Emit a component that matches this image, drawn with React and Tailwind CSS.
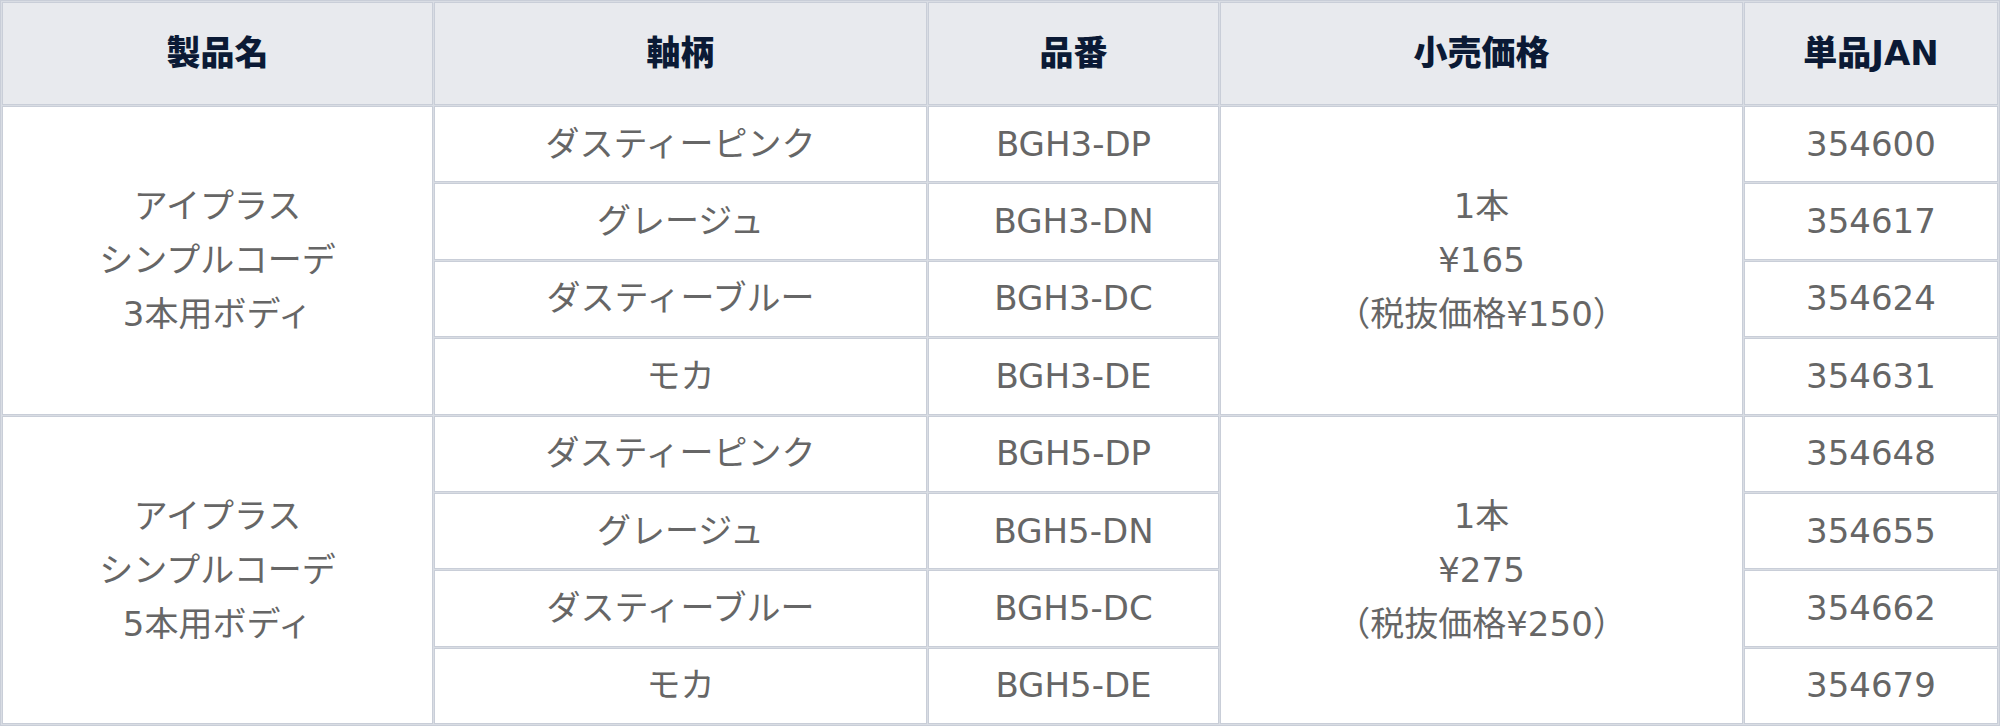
import React from "react";

const groups = [
  {
    name: ["アイプラス", "シンプルコーデ", "3本用ボディ"],
    price: ["1本", "¥165", "（税抜価格¥150）"],
    items: [
      ["ダスティーピンク", "BGH3-DP", "354600"],
      ["グレージュ", "BGH3-DN", "354617"],
      ["ダスティーブルー", "BGH3-DC", "354624"],
      ["モカ", "BGH3-DE", "354631"],
    ],
  },
  {
    name: ["アイプラス", "シンプルコーデ", "5本用ボディ"],
    price: ["1本", "¥275", "（税抜価格¥250）"],
    items: [
      ["ダスティーピンク", "BGH5-DP", "354648"],
      ["グレージュ", "BGH5-DN", "354655"],
      ["ダスティーブルー", "BGH5-DC", "354662"],
      ["モカ", "BGH5-DE", "354679"],
    ],
  },
];

const headers = ["製品名", "軸柄", "品番", "小売価格", "単品JAN"];

const cell =
  "border border-[#c9ced8] bg-white flex items-center justify-center text-center text-[#666666]";

export default function App() {
  return (
    <div
      className="w-[2000px] h-[726px] grid grid-cols-[431px_493px_291px_523px_254px] grid-rows-[103px_repeat(8,76.375px)] gap-px p-px border border-[#c9ced8] bg-[#d9dde4] text-[34px]"
      style={{ fontFamily: '"DejaVu Sans", "Noto Sans CJK JP", sans-serif' }}
    >
      {headers.map((h) => (
        <div
          key={h}
          className="border border-[#c9ced8] bg-[#e8eaee] flex items-center justify-center font-black text-[#0b1a35] text-[34px]"
        >
          {h}
        </div>
      ))}
      {groups.map((g, gi) => (
        <React.Fragment key={gi}>
          {g.items.map((it, i) => (
            <React.Fragment key={i}>
              {i === 0 && (
                <div className={`${cell} row-span-4 flex-col leading-[54px]`}>
                  {g.name.map((l) => (
                    <div key={l}>{l}</div>
                  ))}
                </div>
              )}
              <div className={cell}>{it[0]}</div>
              <div className={cell}>{it[1]}</div>
              {i === 0 && (
                <div className={`${cell} row-span-4 flex-col leading-[54px]`}>
                  {g.price.map((l) => (
                    <div key={l}>{l}</div>
                  ))}
                </div>
              )}
              <div className={cell}>{it[2]}</div>
            </React.Fragment>
          ))}
        </React.Fragment>
      ))}
    </div>
  );
}
